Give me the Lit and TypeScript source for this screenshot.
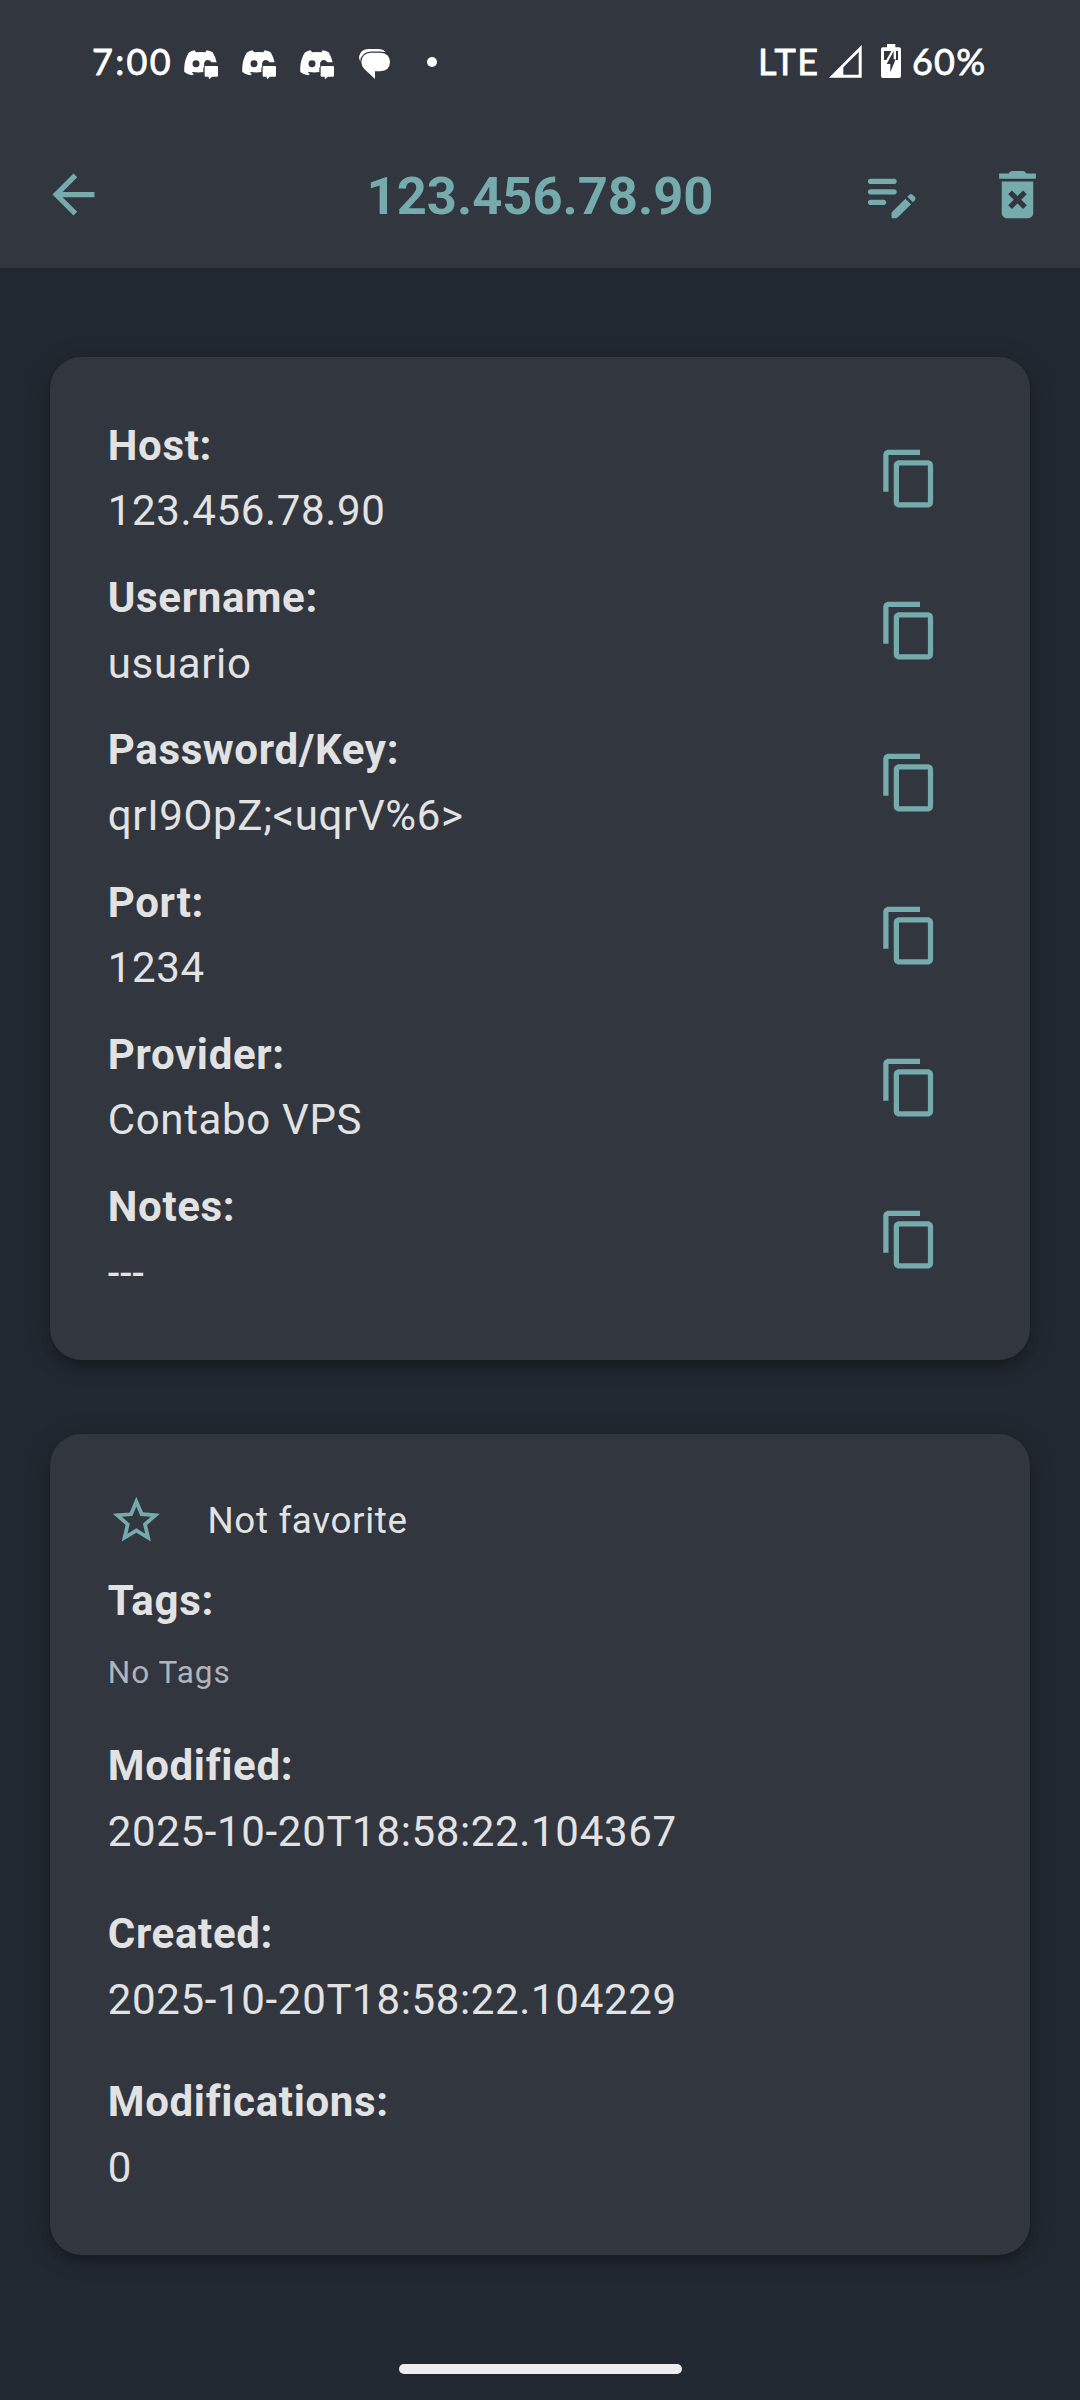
import { LitElement, html, css } from "lit";
import { customElement, property } from "lit/decorators.js";

const ICONS: Record<string, string> = {
  back: "M20 11H7.83l5.59-5.59L12 4l-8 8 8 8 1.41-1.41L7.83 13H20v-2z",
  editNote:
    "M14 11c0 .55-.45 1-1 1H4c-.55 0-1-.45-1-1s.45-1 1-1h9c.55 0 1 .45 1 1zM3 7c0 .55.45 1 1 1h9c.55 0 1-.45 1-1s-.45-1-1-1H4c-.55 0-1 .45-1 1zm7 8c0-.55-.45-1-1-1H4c-.55 0-1 .45-1 1s.45 1 1 1h5c.55 0 1-.45 1-1zm8.01-2.13.71-.71a.996.996 0 0 1 1.41 0l.71.71c.39.39.39 1.02 0 1.41l-.71.71-2.12-2.12zm-.71.71-5.01 5.01c-.18.18-.29.44-.29.7v1.21c0 .28.22.5.5.5h1.21c.27 0 .52-.11.71-.29l5.01-5.01-2.13-2.12z",
  trash:
    "M6 19c0 1.1.9 2 2 2h8c1.1 0 2-.9 2-2V7H6v12zm2.46-7.12 1.41-1.41L12 12.59l2.12-2.12 1.41 1.41L13.41 14l2.12 2.12-1.41 1.41L12 15.41l-2.12 2.12-1.41-1.41L10.59 14l-2.13-2.12zM15.5 4l-.71-.71c-.18-.18-.44-.29-.7-.29H9.91c-.26 0-.52.11-.7.29L8.5 4H5v2h14V4z",
  copy: "M16 1H4c-1.1 0-2 .9-2 2v14h2V3h12V1zm3 4H8c-1.1 0-2 .9-2 2v14c0 1.1.9 2 2 2h11c1.1 0 2-.9 2-2V7c0-1.1-.9-2-2-2zm0 16H8V7h11v14z",
  star: "M22 9.24l-7.19-.62L12 2 9.19 8.63 2 9.24l5.46 4.73L5.82 21 12 17.27 18.18 21l-1.63-7.03L22 9.24zM12 15.4l-3.76 2.27 1-4.28-3.32-2.88 4.38-.38L12 6.1l1.71 4.04 4.38.38-3.32 2.88 1 4.28L12 15.4z",
};

@customElement("md-icon")
class MdIcon extends LitElement {
  @property() name = "";
  static styles = css`
    :host { display: block; width: 63px; height: 63px; flex: none; color: #76abae; }
    svg { display: block; width: 100%; height: 100%; fill: currentColor; }
  `;
  render() {
    return html`<svg viewBox="0 0 24 24"><path d=${ICONS[this.name]} /></svg>`;
  }
}

@customElement("status-bar")
class StatusBar extends LitElement {
  static styles = css`
    :host {
      display: flex; align-items: flex-start; box-sizing: border-box;
      height: 126px; padding: 44px 93px 0 92px; color: #fff;
      font: 400 36px/34px Lato, "Liberation Sans", sans-serif;
      -webkit-text-stroke: 0.8px #fff;
    }
    svg { display: block; flex: none; fill: #fff; }
    .time { width: 91.7px; letter-spacing: 2.3px; }
    .discord { width: 34px; height: 29.3px; margin: 6px 24px 0 0; }
    .chat { width: 31px; height: 30px; margin: 5px 37px 0 1px; }
    .dot { width: 10px; height: 10px; border-radius: 50%; background: #fff; margin-top: 13px; }
    .gap { flex: 1; }
    .lte { width: 71.3px; letter-spacing: 1.4px; }
    .signal { width: 32.7px; height: 32.7px; margin: 1px 19px 0 0; }
    .battery { width: 20px; height: 34px; margin-right: 11px; }
    .pct { width: 75px; letter-spacing: 1.2px; }
    .cut { fill: #31363f; }
    .front { stroke: #31363f; stroke-width: 7px; paint-order: stroke; }
  `;
  private discord() {
    return html`<svg class="discord" viewBox="0 0 102 88">
      <path d="M14 8Q23 2 32 1L36 7Q51 5 64 7L68 1Q78 2 86 7Q94 20 98 37H82Q79 30 71 30Q62 31 60 41Q62 48 58 54V66Q44 69 27 66L23 68L30 72L24 76Q10 74 1 66Q-2 34 14 8Z" />
      <circle class="cut" cx="36" cy="41" r="10.5" />
      <path d="M65 48H99Q102 48 102 51V77Q102 80 99 80H84L75 88L74 80H65Q62 80 62 77V51Q62 48 65 48Z" />
    </svg>`;
  }
  render() {
    return html`
      <span class="time">7:00</span>
      ${[0, 1, 2].map(() => this.discord())}
      <svg class="chat" viewBox="0 0 93 90">
        <path d="M28 0H58Q72 0 80 10H40Q10 12 6 40Q-2 30 1 20Q6 1 28 0Z" />
        <path class="front" d="M36 11H64Q93 13 93 39Q92 66 64 67H48V90L16 60Q7 51 7 39Q8 13 36 11Z" />
      </svg>
      <span class="dot"></span>
      <span class="gap"></span>
      <span class="lte">LTE</span>
      <svg class="signal" viewBox="0 0 98 98">
        <path fill-rule="evenodd" d="M0 98L98 0V98ZM43 67V89H89V21Z" />
      </svg>
      <svg class="battery" viewBox="0 0 60 102">
        <path d="M18 0H43V10H54Q60 10 60 16V96Q60 102 54 102H6Q0 102 0 96V16Q0 10 6 10H18Z" />
        <path class="cut" d="M9 21H31L16 48H9ZM45 21H51V48H45Z" />
        <path class="cut" d="M38 21V46H44L28 85V60H17Z" />
      </svg>
      <span class="pct">60%</span>
    `;
  }
}

@customElement("field-text")
class FieldText extends LitElement {
  @property() label = "";
  @property() value = "";
  static styles = css`
    :host { display: block; font-size: 42px; line-height: 65.6px; letter-spacing: 0.66px; white-space: pre; }
    .label { font-weight: 700; }
  `;
  render() {
    return html`<div class="label">${this.label}:</div><div>${this.value}</div>`;
  }
}

@customElement("app-root")
class AppRoot extends LitElement {
  static styles = css`
    :host {
      display: flex; flex-direction: column; box-sizing: border-box;
      width: 1080px; height: 2400px; overflow: hidden;
      background: #222831; color: #e2e2e2;
      font-family: Roboto, "Liberation Sans", sans-serif;
    }
    .top { background: #31363f; height: 268px; flex: none; }
    .bar {
      display: grid; grid-template-columns: 1fr auto 1fr; align-items: center;
      height: 137px; padding: 0 31.5px;
    }
    .back { margin-left: 10.5px; }
    .title { margin: 0; padding-top: 3px; font-size: 52.5px; font-weight: 700; line-height: 63px; color: #76abae; }
    .actions { display: flex; justify-content: flex-end; gap: 63px; }
    .card {
      margin: 0 50px; padding: 55px 57.75px; box-sizing: border-box; flex: none;
      background: #31363f; border-radius: 31.5px;
      box-shadow: 0 8px 11px -2px rgba(0, 0, 0, 0.22), 0 3px 26px rgba(0, 0, 0, 0.2);
    }
    .access { margin-top: 89px; height: 1003px; padding-top: 55.8px; display: flex; flex-direction: column; gap: 21.05px; }
    .row { display: flex; align-items: center; justify-content: space-between; padding-right: 31.5px; }
    .meta { margin-top: 73.5px; height: 821.2px; padding-top: 56px; }
    .fav { display: flex; align-items: center; height: 62px; gap: 42.5px; font-size: 36.75px; letter-spacing: 0.66px; }
    .star { width: 56.7px; height: 56.7px; margin-left: 0.5px; }
    .tags-label { font-size: 42px; font-weight: 700; line-height: 65.6px; letter-spacing: 0.66px; margin-top: 16px; }
    .tags { font-size: 31.5px; line-height: 42px; letter-spacing: 1.05px; color: #b1b4b8; margin: 19px 0 39px; }
    .stamps { display: flex; flex-direction: column; gap: 36.8px; }
    .home { width: 283px; height: 10px; border-radius: 5px; background: #ededed; margin: auto auto 26px; }
  `;
  private fields = [
    ["Host", "123.456.78.90"],
    ["Username", "usuario"],
    ["Password/Key", "qrI9OpZ;<uqrV%6>"],
    ["Port", "1234"],
    ["Provider", "Contabo VPS"],
    ["Notes", "---"],
  ];
  private stamps = [
    ["Modified", "2025-10-20T18:58:22.104367"],
    ["Created", "2025-10-20T18:58:22.104229"],
    ["Modifications", "0"],
  ];
  render() {
    return html`
      <header class="top">
        <status-bar></status-bar>
        <div class="bar">
          <md-icon class="back" name="back"></md-icon>
          <h1 class="title">123.456.78.90</h1>
          <div class="actions">
            <md-icon name="editNote"></md-icon>
            <md-icon name="trash"></md-icon>
          </div>
        </div>
      </header>
      <section class="card access">
        ${this.fields.map(
          ([label, value]) => html`<div class="row">
            <field-text .label=${label} .value=${value}></field-text>
            <md-icon name="copy"></md-icon>
          </div>`
        )}
      </section>
      <section class="card meta">
        <div class="fav"><md-icon class="star" name="star"></md-icon><span>Not favorite</span></div>
        <div class="tags-label">Tags:</div>
        <div class="tags">No Tags</div>
        <div class="stamps">
          ${this.stamps.map(([label, value]) => html`<field-text .label=${label} .value=${value}></field-text>`)}
        </div>
      </section>
      <div class="home"></div>
    `;
  }
}
